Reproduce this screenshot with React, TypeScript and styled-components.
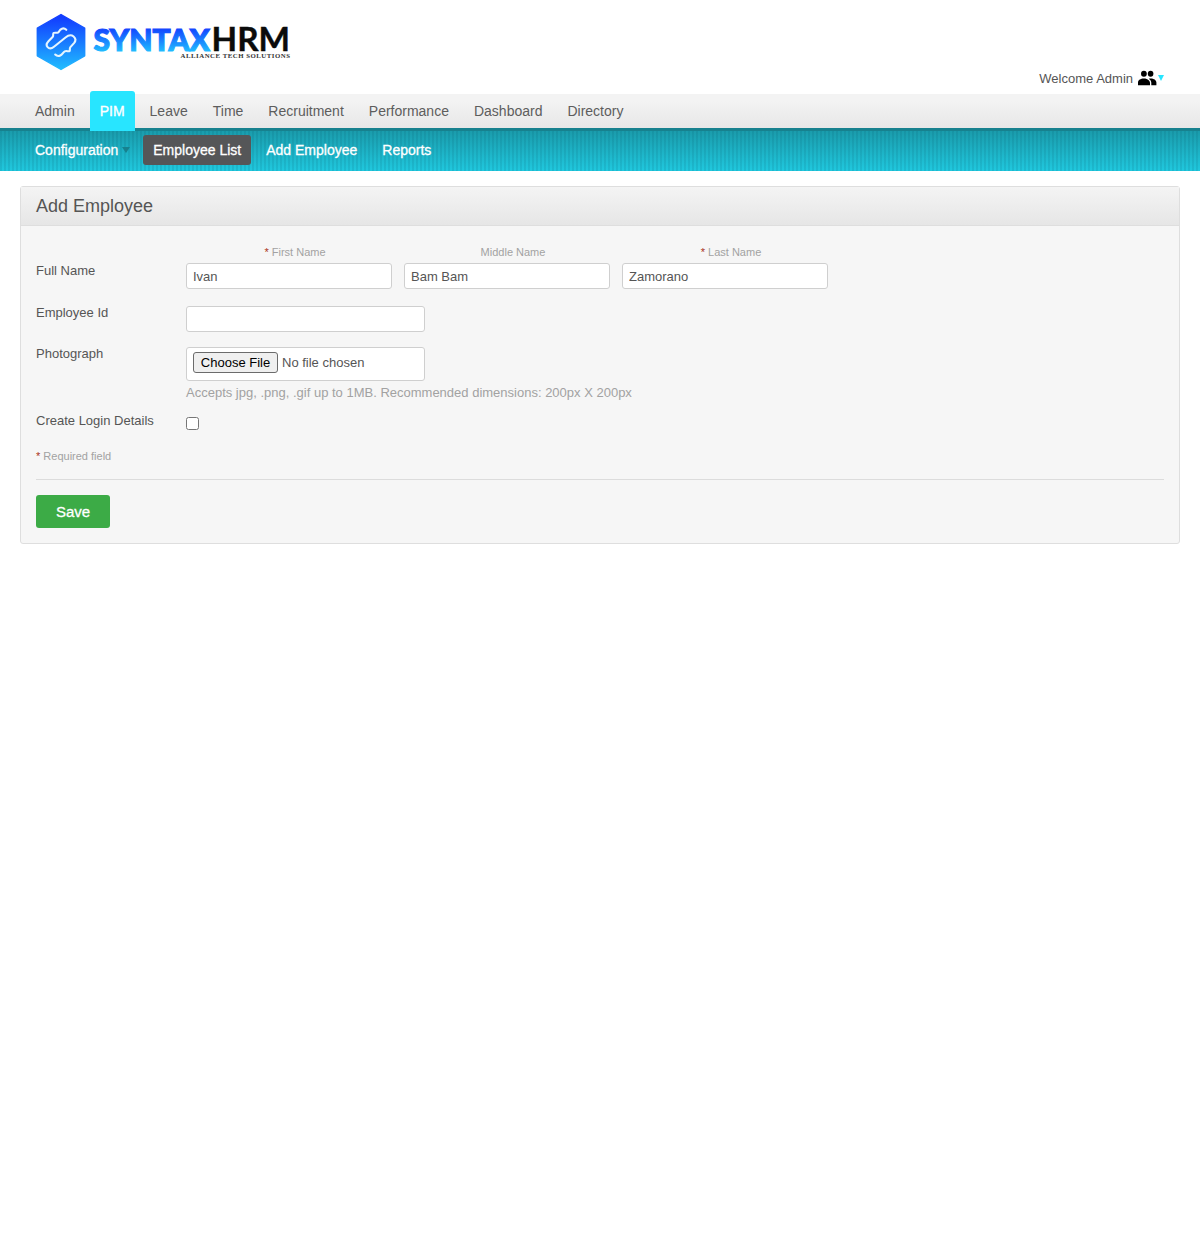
import React from "react";
import styled, { createGlobalStyle, css } from "styled-components";

const GlobalStyle = createGlobalStyle`
  * { box-sizing: border-box; }
  body {
    margin: 0;
    background: #fff;
    color: #555;
    font-family: "Liberation Sans", Arial, Helvetica, sans-serif;
    font-size: 13px;
    line-height: 15px;
  }
`;

const Header = styled.header`
  display: flex;
  justify-content: space-between;
  height: 94px;
  padding: 0 36px 0 34px;
`;

const LogoArt = styled.svg`
  display: block;
  margin-top: 10px;
`;

const Welcome = styled.div`
  display: flex;
  align-items: center;
  align-self: flex-end;
  height: 22px;
  margin-bottom: 5px;
`;

const PeopleArt = styled.svg`
  display: block;
  margin: 0 1px 0 5px;
`;

const Caret = styled.span<{ $color: string; $half: number; $drop: number }>`
  border: solid transparent;
  border-width: ${(p) => p.$drop}px ${(p) => p.$half}px 0;
  border-top-color: ${(p) => p.$color};
`;

const bar = css`
  display: flex;
  gap: 5px;
  padding: 0 25px;
  font-size: 14px;
`;

const MainMenu = styled.nav`
  ${bar}
  height: 37px;
  background: linear-gradient(#f3f3f3 20%, #e7e7e7);
  border-bottom: 3px solid #17818e;
`;

const MainItem = styled.a<{ $active?: boolean }>`
  height: 40px;
  margin-top: -3px;
  padding: 0 10px;
  line-height: 40px;
  border-radius: 3px 3px 0 0;
  color: ${(p) => (p.$active ? "#fff" : "#5d5d5d")};
  background: ${(p) => (p.$active ? "#28e5ff" : "transparent")};
  -webkit-text-stroke: ${(p) => (p.$active ? "0.35px" : "0")};
`;

const SubMenu = styled.nav`
  ${bar}
  height: 40px;
  padding-top: 4px;
  background:
    repeating-linear-gradient(90deg, rgba(0, 70, 90, 0.11) 0 2px, transparent 2px 4px),
    linear-gradient(#1a9cac, #20c8de);
`;

const SubItem = styled.a<{ $active?: boolean; $menu?: boolean }>`
  display: flex;
  align-items: center;
  gap: 4px;
  height: 30px;
  padding: 0 ${(p) => (p.$menu ? 8 : 10)}px 0 10px;
  border-radius: 3px;
  color: #fff;
  background: ${(p) => (p.$active ? "#555658" : "transparent")};
  -webkit-text-stroke: 0.3px;
`;

const Panel = styled.main`
  margin: 15px 20px 0;
  height: 358px;
  border: 1px solid #dedede;
  border-radius: 3px;
  background: #f6f6f6;
`;

const PanelTitle = styled.h1`
  height: 39px;
  margin: 0;
  padding: 0 15px;
  border-bottom: 1px solid #dedede;
  background: linear-gradient(#f4f4f4, #e6e6e6);
  font-size: 18px;
  font-weight: 400;
  line-height: 38px;
`;

const Form = styled.form`
  padding: 18px 15px 0;
`;

const Row = styled.div<{ $height: number }>`
  display: grid;
  grid-template-columns: 150px 1fr;
  align-items: start;
  height: ${(p) => p.$height}px;
`;

const Label = styled.label<{ $shift?: number }>`
  margin-top: ${(p) => p.$shift ?? -1}px;
`;

const Names = styled.div`
  display: flex;
  gap: 12px;
`;

const NameField = styled.label`
  display: flex;
  flex-direction: column;
  width: 206px;
`;

const Hint = styled.span`
  height: 19px;
  padding-left: 12px;
  color: #a2a2a2;
  font-size: 11px;
  line-height: 16px;
  text-align: center;
`;

const Star = styled.em`
  color: #aa3322;
  font-style: normal;
`;

const TextBox = styled.input<{ $width: number }>`
  display: block;
  width: ${(p) => p.$width}px;
  height: 26px;
  padding: 1px 6px;
  border: 1px solid #cfcfcf;
  border-radius: 3px;
  background: #fff;
  color: #555;
  font: 13px "Liberation Sans", Arial, sans-serif;
`;

const FileBox = styled.div`
  display: flex;
  align-items: flex-start;
  gap: 4px;
  width: 239px;
  height: 34px;
  padding: 4px 6px;
  border: 1px solid #cfcfcf;
  border-radius: 3px;
  background: #fff;
  line-height: 21px;
`;

const ChooseButton = styled.button`
  width: 85px;
  height: 21px;
  padding: 0;
  border: 1px solid #6b6b6b;
  border-radius: 3px;
  background: #efefef;
  color: #000;
  font: 13px "Liberation Sans", Arial, sans-serif;
`;

const FileNote = styled.div`
  margin-top: 4px;
  color: #a2a2a2;
`;

const Check = styled.input`
  display: block;
  width: 13px;
  height: 13px;
  margin: 4px 0 0;
`;

const Required = styled.p`
  height: 31px;
  margin: 0;
  border-bottom: 1px solid #dcdcdc;
  color: #a2a2a2;
  font-size: 11px;
`;

const SaveButton = styled.button`
  display: block;
  width: 74px;
  height: 33px;
  margin-top: 15px;
  padding: 0;
  border: 0;
  border-radius: 3px;
  background: #3cab46;
  color: #fff;
  font: 15px "Liberation Sans", Arial, sans-serif;
  -webkit-text-stroke: 0.3px;
`;

const mainItems = ["Admin", "PIM", "Leave", "Time", "Recruitment", "Performance", "Dashboard", "Directory"];

const nameFields = [
  { label: "First Name", value: "Ivan", required: true },
  { label: "Middle Name", value: "Bam Bam", required: false },
  { label: "Last Name", value: "Zamorano", required: true },
];

function PeopleIcon() {
  return (
    <PeopleArt width="19" height="16" viewBox="0 0 19 16" fill="#000">
      <ellipse cx="5.9" cy="3.8" rx="2.9" ry="3" />
      <ellipse cx="12.6" cy="3.8" rx="2.8" ry="3" />
      <path d="M0 15.2V12.4C0 10 2.6 8.4 5.8 8.4 8 8.4 9.6 9 10.4 10 11.6 11 12 11.9 12 13V15.2Z" />
      <path d="M10.8 8.7C14.6 7.9 18.4 9.6 18.4 12.6V15.2H13.3V12.8C13.3 11.2 12.4 9.8 10.8 8.7Z" />
    </PeopleArt>
  );
}

function Logo() {
  return (
    <LogoArt width="260" height="62" viewBox="34 10 260 62">
      <defs>
        <linearGradient id="hex" x1="0" y1="0" x2="0" y2="1">
          <stop offset="0.05" stopColor="#123dff" />
          <stop offset="1" stopColor="#20bdff" />
        </linearGradient>
        <linearGradient id="word" gradientUnits="userSpaceOnUse" x1="0" y1="27" x2="0" y2="52">
          <stop offset="0" stopColor="#123cff" />
          <stop offset="1" stopColor="#20bfff" />
        </linearGradient>
      </defs>
      <path
        d="M61 14.5 84.7 28.2V55.8L61 69.5 37.3 55.8V28.2Z"
        fill="url(#hex)"
        stroke="url(#hex)"
        strokeWidth="1.4"
        strokeLinejoin="round"
      />
      <path
        d="M66.3 29.8C64.4 28 62 28.3 60.5 29.6 58.9 31 59.4 31.8 58 32.5 56.5 33.1 54.4 32.2 53.5 33.1 52.8 33.9 53.6 35.5 52.8 36.8L48.5 41.2C46.4 43.5 46.2 45.7 47.6 47.1 49.4 49 51.8 48.6 54 46.7L65.5 37.5C68.5 35 71.4 34.7 73.6 36.5 75.8 38.4 75.8 41 74 43.1L70.4 47.1C69.2 48.6 70.4 50.3 69.5 51.1 68.5 51.8 66.4 50.4 64.8 51.3 63.1 52.3 62.5 54.5 60.3 55.5 58.5 56.3 56.5 55.9 55.2 54.5"
        fill="none"
        stroke="#e5f5ff"
        strokeWidth="2.1"
        strokeLinecap="round"
        strokeLinejoin="round"
      />
      <text
        x="93.5"
        y="50.6"
        fill="url(#word)"
        stroke="url(#word)"
        strokeWidth="1.2"
        fontFamily="Lato, sans-serif"
        fontWeight="900"
        fontSize="30.5"
        textLength="116.5"
        lengthAdjust="spacingAndGlyphs"
      >
        SYNTAX
      </text>
      <text
        x="211.5"
        y="50.8"
        fill="#0b0b0b"
        stroke="#0b0b0b"
        strokeWidth="0.4"
        fontFamily="Lato, sans-serif"
        fontWeight="700"
        fontSize="31.5"
        textLength="78.5"
        lengthAdjust="spacingAndGlyphs"
      >
        HRM
      </text>
      <text x="180.5" y="58.2" fill="#333" fontFamily="Liberation Serif, serif" fontWeight="700" fontSize="6.8" textLength="109.5">
        ALLIANCE TECH SOLUTIONS
      </text>
    </LogoArt>
  );
}

export default function App() {
  return (
    <>
      <GlobalStyle />
      <Header>
        <Logo />
        <Welcome>
          Welcome Admin
          <PeopleIcon />
          <Caret $color="#28e5ff" $half={3.5} $drop={6} />
        </Welcome>
      </Header>
      <MainMenu>
        {mainItems.map((item) => (
          <MainItem key={item} $active={item === "PIM"}>{item}</MainItem>
        ))}
      </MainMenu>
      <SubMenu>
        <SubItem $menu>
          Configuration
          <Caret $color="#17818e" $half={4} $drop={6} />
        </SubItem>
        <SubItem $active>Employee List</SubItem>
        <SubItem>Add Employee</SubItem>
        <SubItem>Reports</SubItem>
      </SubMenu>
      <Panel>
        <PanelTitle>Add Employee</PanelTitle>
        <Form>
          <Row $height={62}>
            <Label $shift={19}>Full Name</Label>
            <Names>
              {nameFields.map((field) => (
                <NameField key={field.label}>
                  <Hint>
                    {field.required && <Star>* </Star>}
                    {field.label}
                  </Hint>
                  <TextBox $width={206} defaultValue={field.value} />
                </NameField>
              ))}
            </Names>
          </Row>
          <Row $height={41}>
            <Label>Employee Id</Label>
            <TextBox $width={239} />
          </Row>
          <Row $height={66}>
            <Label>Photograph</Label>
            <div>
              <FileBox>
                <ChooseButton type="button">Choose File</ChooseButton>
                No file chosen
              </FileBox>
              <FileNote>Accepts jpg, .png, .gif up to 1MB. Recommended dimensions: 200px X 200px</FileNote>
            </div>
          </Row>
          <Row $height={36}>
            <Label $shift={0}>Create Login Details</Label>
            <Check type="checkbox" />
          </Row>
          <Required>
            <Star>*</Star> Required field
          </Required>
          <SaveButton type="button">Save</SaveButton>
        </Form>
      </Panel>
    </>
  );
}
